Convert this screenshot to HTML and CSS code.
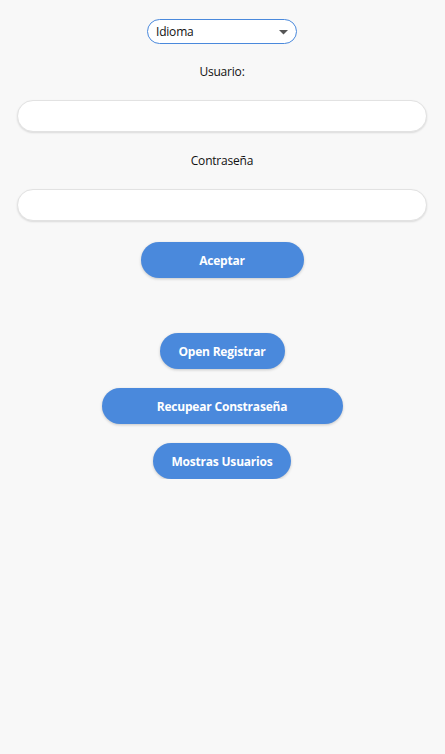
FILE: index.html
```html
<!DOCTYPE html>
<html lang="es">
<head>
<meta charset="utf-8">
<link rel="stylesheet" href="styles.css">
</head>
<body>
<main class="page">
  <div class="select">
    <span class="select-text">Idioma</span>
    <svg class="select-arrow" width="9" height="5" viewBox="0 0 9 5"><path d="M0 0 L9 0 L4.5 4.5 Z" fill="#555"/></svg>
  </div>
  <label class="label label-user">Usuario:</label>
  <div class="input"></div>
  <label class="label label-pass">Contraseña</label>
  <div class="input"></div>
  <button class="btn btn-accept">Aceptar</button>
  <div class="actions">
    <button class="btn btn-register">Open Registrar</button>
    <button class="btn btn-recover">Recupear Constraseña</button>
    <button class="btn btn-users">Mostras Usuarios</button>
  </div>
</main>
</body>
</html>
```
FILE: styles.css
```css
html, body {
  margin: 0;
  padding: 0;
  background: #f8f8f8;
  font-family: "Open Sans", "Noto Sans", sans-serif;
  font-size: 12px;
  color: #111;
}
.page {
  display: flex;
  flex-direction: column;
  align-items: center;
  padding: 19px 18px 0 17px;
}
.select {
  box-sizing: border-box;
  width: 150px;
  height: 25px;
  border: 1px solid #4a89dc;
  border-radius: 13px;
  background: #fff;
  display: flex;
  align-items: center;
  justify-content: space-between;
  padding: 0 8px 0 8px;
}
.select-text {
  font-size: 12px;
  color: #111;
  letter-spacing: -0.2px;
}
.select-arrow {
  display: block;
  margin-top: 1px;
}
.label {
  display: block;
  text-align: center;
  line-height: 16px;
  letter-spacing: -0.2px;
}
.label-user {
  margin-top: 20px;
}
.label-pass {
  margin-top: 21px;
}
.input {
  box-sizing: border-box;
  align-self: stretch;
  height: 32px;
  margin-top: 20px;
  background: #fff;
  border: 1px solid #e2e2e2;
  border-radius: 16px;
  box-shadow: 0 1px 2px rgba(0,0,0,0.12);
}
.btn {
  box-sizing: border-box;
  height: 36px;
  border: none;
  border-radius: 18px;
  background: #4a89dc;
  color: #fff;
  font-family: "Open Sans", "Noto Sans", sans-serif;
  font-size: 12px;
  font-weight: 700;
  letter-spacing: -0.2px;
  padding: 0;
  box-shadow: 0 1px 3px rgba(0,0,0,0.2);
}
.btn-accept {
  width: 163px;
  margin-top: 21px;
}
.actions {
  display: flex;
  flex-direction: column;
  align-items: center;
  gap: 19px;
  margin-top: 55px;
}
.btn-register { width: 125px; }
.btn-recover { width: 241px; }
.btn-users { width: 138px; }
```
